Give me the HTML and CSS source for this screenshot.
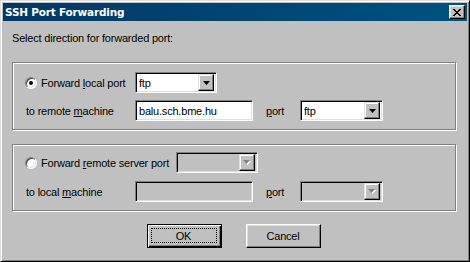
FILE: index.html
```html
<!DOCTYPE html>
<html lang="en">
<head>
    <meta charset="UTF-8">
    <title>SSH Port Forwarding</title>
    <link rel="stylesheet" href="styles.css">
</head>
<body>
<div class="window">
    <div class="titlebar">
        <span class="title">SSH Port Forwarding</span>
        <span class="close-btn">
            <svg width="8" height="7" viewBox="0 0 8 7">
                <path d="M0 0h2v1H0zM6 0h2v1H6zM1 1h2v1H1zM5 1h2v1H5zM2 2h4v1H2zM3 3h2v1H3zM2 4h4v1H2zM1 5h2v1H1zM5 5h2v1H5zM0 6h2v1H0zM6 6h2v1H6z" fill="#000"/>
            </svg>
        </span>
    </div>

    <div class="client">
        <p class="prompt">Select direction for forwarded port:</p>

        <div class="group group-local">
            <div class="row">
                <label class="lbl lbl-radio">
                    <span class="radio checked"></span>
                    <span>Forward <u>l</u>ocal port</span>
                </label>
                <div class="combo combo-short">
                    <span class="combo-text">ftp</span>
                    <span class="drop"><svg width="7" height="4" viewBox="0 0 7 4"><path d="M0 0h7L3.5 4z" fill="#000"/></svg></span>
                </div>
            </div>
            <div class="row">
                <label class="lbl"><span>to remote <u>m</u>achine</span></label>
                <div class="field">balu.sch.bme.hu</div>
                <label class="lbl-port"><u>p</u>ort</label>
                <div class="combo combo-port">
                    <span class="combo-text">ftp</span>
                    <span class="drop"><svg width="7" height="4" viewBox="0 0 7 4"><path d="M0 0h7L3.5 4z" fill="#000"/></svg></span>
                </div>
            </div>
        </div>

        <div class="group group-remote">
            <div class="row">
                <label class="lbl lbl-radio lbl-wide">
                    <span class="radio"></span>
                    <span>Forward <u>r</u>emote server port</span>
                </label>
                <div class="combo combo-short disabled">
                    <span class="combo-text"></span>
                    <span class="drop"><svg width="8" height="5" viewBox="0 0 8 5"><path d="M1 1h7L4.5 5z" fill="#fff"/><path d="M0 0h7L3.5 4z" fill="#808080"/></svg></span>
                </div>
            </div>
            <div class="row">
                <label class="lbl"><span>to local <u>m</u>achine</span></label>
                <div class="field disabled"></div>
                <label class="lbl-port"><u>p</u>ort</label>
                <div class="combo combo-port disabled">
                    <span class="combo-text"></span>
                    <span class="drop"><svg width="8" height="5" viewBox="0 0 8 5"><path d="M1 1h7L4.5 5z" fill="#fff"/><path d="M0 0h7L3.5 4z" fill="#808080"/></svg></span>
                </div>
            </div>
        </div>

        <div class="buttons">
            <button class="btn btn-default"><span class="focus">OK</span></button>
            <button class="btn">Cancel</button>
        </div>
    </div>
</div>
</body>
</html>
```

FILE: styles.css
```css
body {
    margin: 0;
    background: #c0c0c0;
    font-family: "Liberation Sans", Arial, sans-serif;
    font-size: 11px;
    letter-spacing: -0.2px;
    color: #000;
}

.window {
    width: 470px;
    height: 262px;
    box-sizing: border-box;
    background: #c0c0c0;
    border: 1px solid;
    border-color: #dfdfdf #000 #000 #dfdfdf;
    box-shadow: inset 1px 1px #fff, inset -1px -1px #808080;
    padding: 2px;
}

.titlebar {
    height: 18px;
    display: flex;
    align-items: center;
    justify-content: space-between;
    padding: 0 2px 0 2px;
    background: linear-gradient(to right, #033866, #00527f);
}

.title {
    color: #fff;
    font-family: "DejaVu Sans", sans-serif;
    font-weight: bold;
    font-size: 10.5px;
    letter-spacing: -0.2px;
}

.close-btn {
    width: 16px;
    height: 14px;
    box-sizing: border-box;
    background: #c0c0c0;
    border: 1px solid;
    border-color: #fff #000 #000 #fff;
    box-shadow: inset -1px -1px #808080, inset 1px 1px #dfdfdf;
    display: flex;
    align-items: center;
    justify-content: center;
}

.close-btn svg {
    display: block;
    margin-left: -1px;
}

.client {
    padding: 0 0 0 9px;
}

.prompt {
    margin: 11px 0 0 0;
    line-height: 13px;
}

.group {
    width: 444px;
    box-sizing: border-box;
    border: 1px solid #808080;
    box-shadow: inset 1px 1px #fff, 1px 1px #fff;
    padding: 9px 0 8px 12px;
    display: flex;
    flex-direction: column;
    gap: 7px;
}

.group-local {
    margin-top: 17px;
}

.group-remote {
    margin-top: 14px;
    padding-top: 7px;
    gap: 8px;
}

.row {
    display: flex;
    align-items: center;
    height: 21px;
}

.lbl {
    width: 110px;
    flex: none;
    padding-left: 1px;
    box-sizing: border-box;
    white-space: nowrap;
}

.lbl-radio {
    display: flex;
    align-items: center;
    padding-left: 0;
    gap: 4px;
}

.lbl-wide {
    width: 151px;
}

.lbl-port {
    margin-left: 13px;
    width: 34px;
}

u {
    text-decoration-thickness: 1px;
    text-underline-offset: 1px;
}

.radio {
    width: 12px;
    height: 12px;
    flex: none;
    box-sizing: border-box;
    border-radius: 50%;
    background: #fff;
    border: 1px solid;
    border-color: #808080 #fff #fff #808080;
    box-shadow: inset 1px 1px #404040, inset -1px -1px #dfdfdf;
    display: flex;
    align-items: center;
    justify-content: center;
}

.radio.checked::after {
    content: "";
    width: 4px;
    height: 4px;
    border-radius: 50%;
    background: #000;
}

.field,
.combo {
    height: 21px;
    flex: none;
    box-sizing: border-box;
    background: #fff;
    border: 1px solid;
    border-color: #808080 #fff #fff #808080;
    box-shadow: inset 1px 1px #000, inset -1px -1px #dfdfdf;
    display: flex;
    align-items: center;
}

.field {
    width: 118px;
    padding-left: 3px;
}

.combo {
    padding: 2px 2px 2px 3px;
    justify-content: space-between;
}

.combo-short {
    width: 82px;
}

.combo-port {
    width: 83px;
}

.disabled {
    background: #c0c0c0;
}

.drop {
    width: 16px;
    height: 17px;
    box-sizing: border-box;
    background: #c0c0c0;
    border: 1px solid;
    border-color: #dfdfdf #000 #000 #dfdfdf;
    box-shadow: inset -1px -1px #808080, inset 1px 1px #fff;
    display: flex;
    align-items: center;
    justify-content: center;
}

.drop svg {
    display: block;
}

.buttons {
    display: flex;
    justify-content: center;
    gap: 24px;
    margin-top: 13px;
    padding-right: 12px;
}

.btn {
    width: 75px;
    height: 24px;
    box-sizing: border-box;
    background: #c0c0c0;
    font-family: "Liberation Sans", Arial, sans-serif;
    font-size: 11px;
    letter-spacing: -0.2px;
    color: #000;
    border: 1px solid;
    border-color: #fff #000 #000 #fff;
    box-shadow: inset -1px -1px #808080, inset 1px 1px #dfdfdf;
    padding: 0;
    display: flex;
    align-items: center;
    justify-content: center;
}

.btn-default {
    border: 1px solid #000;
    box-shadow: inset 1px 1px #fff, inset -1px -1px #000, inset -2px -2px #808080;
    padding: 3px 4px 4px 3px;
}

.focus {
    width: 100%;
    height: 100%;
    box-sizing: border-box;
    border: 1px dotted #000;
    display: flex;
    align-items: center;
    justify-content: center;
}
```
